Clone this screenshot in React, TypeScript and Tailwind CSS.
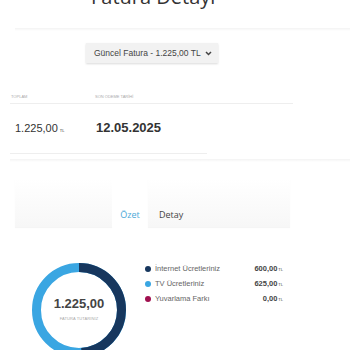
import React from 'react';

const items = [
  { label: 'İnternet Ücretleriniz', value: '600,00', color: 'bg-[#17375e]' },
  { label: 'TV Ücretleriniz', value: '625,00', color: 'bg-[#3aa6e2]' },
  { label: 'Yuvarlama Farkı', value: '0,00', color: 'bg-[#a0104f]' },
];

const Donut: React.FC = () => {
  const r = 42.5;
  const c = 2 * Math.PI * r;
  const dark = (600 / 1225) * c;
  return (
    <div className="relative w-[96px] h-[96px]">
      <svg width="96" height="96" viewBox="0 0 96 96" className="-rotate-90">
        <circle cx="48" cy="48" r={r} fill="none" stroke="#3aa6e2" strokeWidth="9" />
        <circle
          cx="48"
          cy="48"
          r={r}
          fill="none"
          stroke="#17375e"
          strokeWidth="9"
          strokeDasharray={`${dark} ${c}`}
        />
      </svg>
      <div className="absolute inset-0 flex flex-col items-center justify-center pb-[1px]">
        <div className="text-[13px] font-bold text-[#444] leading-none">1.225,00</div>
        <div className="text-[4px] text-[#aaa] mt-[6px] tracking-wide">FATURA TUTARINIZ</div>
      </div>
    </div>
  );
};

export default function App() {
  return (
    <div className="w-[350px] h-[350px] overflow-hidden bg-white font-['Liberation_Sans',Arial,sans-serif] text-[#333]">
      <div className="h-[28px] overflow-hidden">
        <h1 className="-mt-[15px] ml-[91px] text-[20px] leading-[24px] font-medium text-[#333] font-['Open_Sans',sans-serif]">
          Fatura Detayı
        </h1>
      </div>
      <div className="ml-[15px] h-[3px] bg-gradient-to-b from-[#f3f3f3] to-white" />

      <div className="mt-[12px] ml-[86px] w-[132px] h-[20px] bg-[#f2f2f2] shadow-[0_1px_2px_rgba(0,0,0,0.15)] flex items-center justify-between pl-[8px] pr-[6px]">
        <span className="text-[8.5px] text-[#444]">Güncel Fatura - 1.225,00 TL</span>
        <svg width="7" height="5" viewBox="0 0 7 5">
          <path d="M1 1 L3.5 3.5 L6 1" fill="none" stroke="#444" strokeWidth="1.5" />
        </svg>
      </div>

      <div className="mt-[31px] ml-[10px] w-[283px] border-b border-[#eee] pb-[3px] flex text-[4px] text-[#aaa]">
        <span className="w-[85px] pl-[1px]">TOPLAM</span>
        <span>SON ÖDEME TARİHİ</span>
      </div>
      <div className="ml-[10px] w-[197px] border-b border-[#eee] pt-[14px] pb-[15px] flex items-baseline">
        <div className="w-[86px] pl-[5px] flex items-baseline text-[11px] text-[#333]">
          1.225,00<span className="text-[4px] ml-[2px]">TL</span>
        </div>
        <div className="text-[13px] font-bold text-[#333]">12.05.2025</div>
      </div>
      <div className="mt-[5px] ml-[10px] h-[3px] bg-gradient-to-b from-[#f3f3f3] to-white" />

      <div className="mt-[17px] ml-[15px] w-[275px] h-[48px] flex">
        <div className="w-[97px] bg-gradient-to-b from-white to-[#f7f7f7] shadow-[0_1px_1px_rgba(0,0,0,0.04)]" />
        <div className="w-[36px] bg-white flex items-end justify-center pb-[5px]">
          <span className="text-[9px] text-[#4aa8d8] font-['Open_Sans',sans-serif]">Özet</span>
        </div>
        <div className="flex-1 bg-gradient-to-b from-white to-[#f7f7f7] shadow-[0_1px_1px_rgba(0,0,0,0.04)] flex items-end pb-[5px] pl-[11px]">
          <span className="text-[9px] text-[#444] font-['Open_Sans',sans-serif]">Detay</span>
        </div>
      </div>

      <div className="mt-[35px] ml-[31px] flex">
        <Donut />
        <div className="ml-[18px] mt-[3px] w-[138px] flex flex-col gap-[6px]">
          {items.map((it) => (
            <div key={it.label} className="flex items-center h-[9px]">
              <span className={`w-[6px] h-[6px] rounded-full ${it.color}`} />
              <span className="ml-[4px] text-[7.5px] text-[#666] flex-1">{it.label}</span>
              <span className="text-[7.5px] font-bold text-[#444] flex items-baseline">
                {it.value}
                <span className="text-[4px] font-normal ml-[1px]">TL</span>
              </span>
            </div>
          ))}
        </div>
      </div>
    </div>
  );
}
